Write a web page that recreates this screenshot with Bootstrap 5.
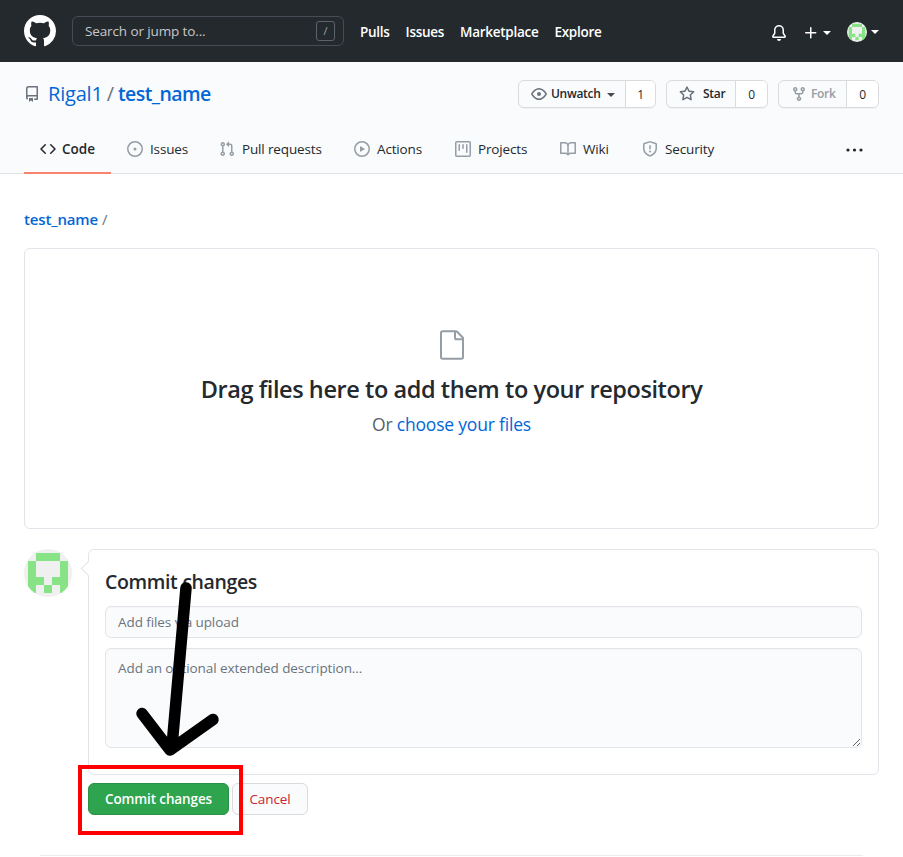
<!DOCTYPE html>
<html lang="en">
<head>
<meta charset="utf-8">
<meta name="viewport" content="width=device-width, initial-scale=1">
<title>Upload files · Rigal1/test_name</title>
<link href="https://cdn.jsdelivr.net/npm/bootstrap@5.3.0/dist/css/bootstrap.min.css" rel="stylesheet">
<style>
body{font-family:"Open Sans","Noto Sans",sans-serif;font-size:14px;line-height:20px;color:#24292e;background:#fff;height:857px;overflow:hidden}
a{text-decoration:none;color:#0366d6}
svg{display:block;flex:none;fill:currentColor}
.w6{font-weight:600}
.topbar{background:#24292e;height:62px;color:#fff}
.logo{margin-top:-1px}
.search{width:272px;height:30px;border:1px solid #444d56;border-radius:6px;color:#c6c8ca;padding:0 8px 0 12px;margin:-1px 16px 0;font-size:13.5px;letter-spacing:-.12px}
.slash{width:19px;height:20px;border:1px solid #5b636c;border-radius:3px;font-size:11px;line-height:18px;color:#9ba1a6;text-align:center}
.topnav a{color:#fff;font-weight:600;font-size:13.5px;letter-spacing:-.28px;white-space:nowrap;padding-top:2px}
.tri{width:0;height:0;border:4px solid transparent;border-top-color:currentColor;border-bottom:0}
.repohead{background:#fafbfc;height:112px;border-bottom:1px solid #e1e4e8}
.titlebar{height:28px;margin-top:18px}
.repotitle{font-size:20px;line-height:28px;white-space:nowrap}
.own{letter-spacing:-.2px}
.rep{font-size:19.5px;letter-spacing:-.6px}
.acts{font-size:12px;line-height:18px;gap:10px}
.act{height:28px;border:1px solid #d9dbdd;border-radius:6px;background:#fafbfc;box-shadow:0 1px 0 rgba(27,31,35,.04);overflow:hidden;letter-spacing:-.3px}
.act svg,.ico{color:#6a737d}
.act .tri{color:#444a50;margin:2px 0 0 6px}
.cnt{background:#fff;border-left:1px solid #d9dbdd;width:32px;text-align:center;line-height:27px;height:26px}
.a1{width:138px}.a2{width:102px}.a3{width:101px}
.a1 .cnt{width:30px}
.off,.act .off svg{color:#959da5}
.tabs{margin-top:17px;height:49px}
.tab{height:49px;padding:0 0 0 16px;white-space:nowrap;color:#24292e;border-bottom:2px solid transparent;font-size:13.5px;letter-spacing:-.15px}
.tab svg{color:#959da5;margin-right:7px}
.tab.on{border-color:#f9826c;font-weight:600;letter-spacing:0}
.tab.on svg{color:#24292e;margin-right:6px}
.t1{width:87px}.t2{width:92px}.t3{width:135px}.t4{width:101px}.t5{width:105px}.t6{width:82px}.t7{width:108px}
.more{padding-bottom:2px}
.crumb{font-size:15px;line-height:24px;margin-top:33px}
.cr{letter-spacing:-.15px}
.drop{height:281px;margin-top:17px;border:1px solid #e1e4e8;border-radius:6px;text-align:center;padding-top:80px}
.drop h3{font-size:23.5px;line-height:32px;font-weight:600;letter-spacing:-.42px;margin:12px 0 5px}
.drop p{font-size:17.5px;line-height:28px;letter-spacing:-.2px;color:#586069;margin:0}
.ava{border-radius:50%}
.peer{margin-top:-2px}
.commitrow{margin-top:20px}
.commit{width:791px;height:226px;border:1px solid #e1e4e8;border-radius:6px;padding:17px 16px 0}
.commit::before{content:"";position:absolute;left:-6px;top:13px;width:11px;height:11px;background:#fff;border:1px solid #e1e4e8;border-width:0 0 1px 1px;transform:rotate(45deg)}
.commit h3{font-size:19.5px;line-height:30px;font-weight:600;letter-spacing:-.36px;margin:0 0 9px}
.form-control.fld{background:#fafbfc;border:1px solid #e1e4e8;border-radius:6px;font-size:13.5px;letter-spacing:-.08px;line-height:20px;padding:5px 12px;height:32px;color:#6a737d;box-shadow:inset 0 1px 0 rgba(225,228,232,.2)}
.form-control.fld::placeholder{color:#6a737d;opacity:1}
.form-control.area{height:100px;padding-top:9px;margin-top:10px;resize:vertical}
.btns{margin:8px 0 0 64px;gap:3px}
.btn.bt{height:32px;padding:0;border-radius:6px;font-size:13.5px;letter-spacing:-.12px;line-height:20px;font-weight:600}
.btn.go,.btn.go:hover{width:141px;background:#2ea44f;border-color:#2a9147;color:#fff}
.btn.no,.btn.no:hover{width:76px;background:#fafbfc;border-color:#d9dbdd;color:#cb2431;font-weight:500}
.foot{margin:40px 16px 0;border-top:1px solid #eaecef}
.redbox{left:78px;top:765px;width:165px;height:70px;border:4px solid #f00}
.arrow{left:0;top:0;pointer-events:none}
</style>
<script src="https://cdn.jsdelivr.net/npm/bootstrap@5.3.0/dist/js/bootstrap.bundle.min.js"></script>
</head>
<body class="position-relative">
<svg width="0" height="0" class="position-absolute">
<symbol id="ident" viewBox="0 0 48 48"><rect width="48" height="48" fill="#f0f0f0"/><path fill="#87e386" d="M12 4h24v8h8v32h-8v-8h-8v-8h8V12H12v16h8v8h-8v8H4V12h8zM20 36h8v8h-8z"/></symbol>
</svg>
<header class="topbar d-flex align-items-center px-4">
  <a href="#" class="text-white logo"><svg width="32" height="32" viewBox="0 0 16 16"><path fill-rule="evenodd" d="M8 0C3.58 0 0 3.58 0 8c0 3.54 2.29 6.53 5.47 7.59.4.07.55-.17.55-.38 0-.19-.01-.82-.01-1.49-2.01.37-2.53-.49-2.69-.94-.09-.23-.48-.94-.82-1.13-.28-.15-.68-.52-.01-.53.63-.01 1.08.58 1.23.82.72 1.21 1.87.87 2.33.66.07-.52.28-.87.51-1.07-1.78-.2-3.64-.89-3.64-3.95 0-.87.31-1.59.82-2.15-.08-.2-.36-1.02.08-2.12 0 0 .67-.21 2.2.82.64-.18 1.32-.27 2-.27.68 0 1.36.09 2 .27 1.53-1.04 2.2-.82 2.2-.82.44 1.1.16 1.92.08 2.12.51.56.82 1.27.82 2.15 0 3.07-1.87 3.75-3.65 3.95.29.25.54.73.54 1.48 0 1.07-.01 1.93-.01 2.2 0 .21.15.46.55.38A8.013 8.013 0 0016 8c0-4.42-3.58-8-8-8z"/></svg></a>
  <div class="search d-flex align-items-center justify-content-between"><span>Search or jump to...</span><span class="slash">/</span></div>
  <nav class="topnav d-flex gap-3"><a href="#">Pulls</a><a href="#">Issues</a><a href="#">Marketplace</a><a href="#">Explore</a></nav>
  <div class="d-flex align-items-center ms-auto pt-1">
    <svg width="16" height="16" viewBox="0 0 16 16"><path d="M8 16a2 2 0 001.985-1.75c.017-.137-.097-.25-.235-.25h-3.5c-.138 0-.252.113-.235.25A2 2 0 008 16z"/><path fill-rule="evenodd" d="M8 1.5A3.5 3.5 0 004.5 5v2.947c0 .346-.102.683-.294.97l-1.703 2.556a.018.018 0 00-.003.01l.001.006c0 .002.002.004.004.006a.017.017 0 00.006.004l.007.001h10.964l.007-.001a.016.016 0 00.006-.004.016.016 0 00.004-.006l.001-.007a.017.017 0 00-.003-.01l-1.703-2.554a1.75 1.75 0 01-.294-.97V5A3.5 3.5 0 008 1.5zM3 5a5 5 0 0110 0v2.947c0 .05.015.098.042.139l1.703 2.555A1.518 1.518 0 0113.482 13H2.518a1.518 1.518 0 01-1.263-2.36l1.703-2.554A.25.25 0 003 7.947V5z"/></svg>
    <svg class="ms-3" width="16" height="16" viewBox="0 0 16 16"><path d="M7.75 2a.75.75 0 01.75.75V7h4.25a.75.75 0 010 1.5H8.5v4.25a.75.75 0 01-1.5 0V8.5H2.75a.75.75 0 010-1.5H7V2.75A.75.75 0 017.75 2z"/></svg>
    <span class="tri ms-1"></span>
    <svg class="ava peer ms-3" width="20" height="20"><use href="#ident"/></svg>
    <span class="tri peer ms-1"></span>
  </div>
</header>
<section class="repohead px-4 d-flex flex-column">
  <div class="titlebar d-flex align-items-center justify-content-between">
    <div class="repotitle d-flex align-items-center"><svg class="ico me-2" width="16" height="16" viewBox="0 0 16 16"><path fill-rule="evenodd" d="M2 2.5A2.5 2.5 0 014.5 0h8.75a.75.75 0 01.75.75v12.5a.75.75 0 01-.75.75h-2.5a.75.75 0 110-1.5h1.75v-2h-8a1 1 0 00-.714 1.7.75.75 0 01-1.072 1.05A2.495 2.495 0 012 11.5v-9zm10.5-1V9h-8c-.356 0-.694.074-1 .208V2.5a1 1 0 011-1h8zM5 12.25v3.25a.25.25 0 00.4.2l1.45-1.087a.25.25 0 01.3 0L8.6 15.7a.25.25 0 00.4-.2v-3.25a.25.25 0 00-.25-.25h-3.5a.25.25 0 00-.25.25z"/></svg><a href="#" class="own">Rigal1</a><span class="mx-1 text-secondary">/</span><a href="#" class="w6 rep">test_name</a></div>
    <div class="acts d-flex">
      <div class="act a1 d-flex"><span class="d-flex align-items-center flex-grow-1 ps-2 w6"><svg class="ms-1 me-1" width="16" height="16" viewBox="0 0 16 16"><path fill-rule="evenodd" d="M1.679 7.932c.412-.621 1.242-1.75 2.366-2.717C5.175 4.242 6.527 3.5 8 3.5c1.473 0 2.824.742 3.955 1.715 1.124.967 1.954 2.096 2.366 2.717a.119.119 0 010 .136c-.412.621-1.242 1.75-2.366 2.717C10.825 11.758 9.473 12.5 8 12.5c-1.473 0-2.824-.742-3.955-1.715C2.92 9.818 2.09 8.69 1.679 8.068a.119.119 0 010-.136zM8 2c-1.981 0-3.67.992-4.933 2.078C1.797 5.169.88 6.423.43 7.1a1.619 1.619 0 000 1.798c.45.678 1.367 1.932 2.637 3.024C4.329 13.008 6.019 14 8 14c1.981 0 3.67-.992 4.933-2.078 1.27-1.091 2.187-2.345 2.637-3.023a1.619 1.619 0 000-1.798c-.45-.678-1.367-1.932-2.637-3.023C11.671 2.992 9.981 2 8 2zm0 8a2 2 0 100-4 2 2 0 000 4z"/></svg>Unwatch<span class="tri"></span></span><span class="cnt">1</span></div>
      <div class="act a2 d-flex"><span class="d-flex align-items-center flex-grow-1 ps-2 w6"><svg class="ms-1 me-2" width="16" height="16" viewBox="0 0 16 16"><path fill-rule="evenodd" d="M8 .25a.75.75 0 01.673.418l1.882 3.815 4.21.612a.75.75 0 01.416 1.279l-3.046 2.97.719 4.192a.75.75 0 01-1.088.791L8 12.347l-3.766 1.98a.75.75 0 01-1.088-.79l.72-4.194L.818 6.374a.75.75 0 01.416-1.28l4.21-.611L7.327.668A.75.75 0 018 .25zm0 2.445L6.615 5.5a.75.75 0 01-.564.41l-3.097.45 2.24 2.184a.75.75 0 01.216.664l-.528 3.084 2.769-1.456a.75.75 0 01.698 0l2.77 1.456-.53-3.084a.75.75 0 01.216-.664l2.24-2.183-3.096-.45a.75.75 0 01-.564-.41L8 2.694v.001z"/></svg>Star</span><span class="cnt">0</span></div>
      <div class="act a3 d-flex"><span class="d-flex align-items-center flex-grow-1 ps-2 off w6"><svg class="ms-1 me-1" width="16" height="16" viewBox="0 0 16 16"><path fill-rule="evenodd" d="M5 3.25a.75.75 0 11-1.5 0 .75.75 0 011.5 0zm0 2.122a2.25 2.25 0 10-1.5 0v.878A2.25 2.25 0 005.75 8.5h1.5v2.128a2.251 2.251 0 101.5 0V8.5h1.5a2.25 2.25 0 002.25-2.25v-.878a2.25 2.25 0 10-1.5 0v.878a.75.75 0 01-.75.75h-4.5A.75.75 0 015 6.25v-.878zm3.75 7.378a.75.75 0 11-1.5 0 .75.75 0 011.5 0zm3-8.75a.75.75 0 100-1.5.75.75 0 000 1.5z"/></svg>Fork</span><span class="cnt">0</span></div>
    </div>
  </div>
  <nav class="tabs d-flex">
    <a href="#" class="tab t1 on d-flex align-items-center"><svg width="16" height="16" viewBox="0 0 16 16"><path fill-rule="evenodd" d="M4.72 3.22a.75.75 0 011.06 1.06L2.06 8l3.72 3.72a.75.75 0 11-1.06 1.06L.47 8.53a.75.75 0 010-1.06l4.25-4.25zm6.56 0a.75.75 0 10-1.06 1.06L13.94 8l-3.72 3.72a.75.75 0 101.06 1.06l4.25-4.25a.75.75 0 000-1.06l-4.25-4.25z"/></svg>Code</a>
    <a href="#" class="tab t2 d-flex align-items-center"><svg width="16" height="16" viewBox="0 0 16 16"><path fill-rule="evenodd" d="M8 1.5a6.5 6.5 0 100 13 6.5 6.5 0 000-13zM0 8a8 8 0 1116 0A8 8 0 010 8z"/><circle cx="8" cy="8" r="1.5"/></svg>Issues</a>
    <a href="#" class="tab t3 d-flex align-items-center"><svg width="16" height="16" viewBox="0 0 16 16"><path fill-rule="evenodd" d="M7.177 3.073L9.573.677A.25.25 0 0110 .854v4.792a.25.25 0 01-.427.177L7.177 3.427a.25.25 0 010-.354zM3.75 2.5a.75.75 0 100 1.5.75.75 0 000-1.5zm-2.25.75a2.25 2.25 0 113 2.122v5.256a2.251 2.251 0 11-1.5 0V5.372A2.25 2.25 0 011.5 3.25zM11 2.5h-1V4h1a1 1 0 011 1v5.628a2.251 2.251 0 101.5 0V5A2.5 2.5 0 0011 2.5zm1 10.25a.75.75 0 111.5 0 .75.75 0 01-1.5 0zM3.75 12a.75.75 0 100 1.5.75.75 0 000-1.5z"/></svg>Pull requests</a>
    <a href="#" class="tab t4 d-flex align-items-center"><svg width="16" height="16" viewBox="0 0 16 16"><path fill-rule="evenodd" d="M1.5 8a6.5 6.5 0 1113 0 6.5 6.5 0 01-13 0zM8 0a8 8 0 100 16A8 8 0 008 0zM6.379 5.227A.25.25 0 006 5.442v5.117a.25.25 0 00.379.214l4.264-2.559a.25.25 0 000-.428L6.379 5.227z"/></svg>Actions</a>
    <a href="#" class="tab t5 d-flex align-items-center"><svg width="16" height="16" viewBox="0 0 16 16"><path fill-rule="evenodd" d="M1.75 0A1.75 1.75 0 000 1.75v12.5C0 15.216.784 16 1.75 16h12.5A1.75 1.75 0 0016 14.25V1.75A1.75 1.75 0 0014.25 0H1.75zM1.5 1.75a.25.25 0 01.25-.25h12.5a.25.25 0 01.25.25v12.5a.25.25 0 01-.25.25H1.75a.25.25 0 01-.25-.25V1.75zM11.75 3a.75.75 0 00-.75.75v7.5a.75.75 0 001.5 0v-7.5a.75.75 0 00-.75-.75zm-8.25.75a.75.75 0 011.5 0v5.5a.75.75 0 01-1.5 0v-5.5zM8 3a.75.75 0 00-.75.75v3.5a.75.75 0 001.5 0v-3.5A.75.75 0 008 3z"/></svg>Projects</a>
    <a href="#" class="tab t6 d-flex align-items-center"><svg width="16" height="16" viewBox="0 0 16 16"><path fill-rule="evenodd" d="M0 1.75A.75.75 0 01.75 1h4.253c1.227 0 2.317.59 3 1.501A3.744 3.744 0 0111.006 1h4.245a.75.75 0 01.75.75v10.5a.75.75 0 01-.75.75h-4.507a2.25 2.25 0 00-1.591.659l-.622.621a.75.75 0 01-1.06 0l-.622-.621A2.25 2.25 0 005.258 13H.75a.75.75 0 01-.75-.75V1.75zm8.755 3a2.25 2.25 0 012.25-2.25H14.5v9h-3.757c-.71 0-1.4.201-1.992.572l.004-7.322zm-1.504 7.324l.004-5.073-.002-2.253A2.25 2.25 0 005.003 2.5H1.5v9h3.757a3.75 3.75 0 011.994.574z"/></svg>Wiki</a>
    <a href="#" class="tab t7 d-flex align-items-center"><svg width="16" height="16" viewBox="0 0 16 16"><path fill-rule="evenodd" d="M7.467.133a1.75 1.75 0 011.066 0l5.25 1.68A1.75 1.75 0 0115 3.48V7c0 1.566-.32 3.182-1.303 4.682-.983 1.498-2.585 2.813-5.032 3.855a1.7 1.7 0 01-1.33 0c-2.447-1.042-4.049-2.357-5.032-3.855C1.32 10.182 1 8.566 1 7V3.48a1.75 1.75 0 011.217-1.667l5.25-1.68zm.61 1.429a.25.25 0 00-.153 0l-5.25 1.68a.25.25 0 00-.174.238V7c0 1.358.275 2.666 1.057 3.86.784 1.194 2.121 2.34 4.366 3.297a.2.2 0 00.154 0c2.245-.956 3.582-2.104 4.366-3.298C13.225 9.666 13.5 8.36 13.5 7V3.48a.25.25 0 00-.174-.237l-5.25-1.68zM9 10.5a1 1 0 11-2 0 1 1 0 012 0zm-.25-5.75a.75.75 0 10-1.5 0v3a.75.75 0 001.5 0v-3z"/></svg>Security</a>
    <a href="#" class="more ms-auto text-dark d-flex align-items-center pe-3"><svg width="17" height="16" viewBox="0 0 17 16"><circle cx="2" cy="9" r="1.6"/><circle cx="8.5" cy="9" r="1.6"/><circle cx="15" cy="9" r="1.6"/></svg></a>
  </nav>
</section>
<main class="px-4">
  <div class="crumb"><a href="#" class="w6 cr">test_name</a><span class="ms-1 text-secondary">/</span></div>
  <div class="drop">
    <svg class="mx-auto" width="32" height="32" viewBox="0 0 24 24" color="#959da5"><path fill-rule="evenodd" d="M5 2.5a.5.5 0 00-.5.5v18a.5.5 0 00.5.5h14a.5.5 0 00.5-.5V8.5h-4a2 2 0 01-2-2v-4H5zm10 0v4a.5.5 0 00.5.5h4a.5.5 0 00-.146-.336l-4.018-4.018A.5.5 0 0015 2.5zM3 3a2 2 0 012-2h9.982a2 2 0 011.414.586l4.018 4.018A2 2 0 0121 7.018V21a2 2 0 01-2 2H5a2 2 0 01-2-2V3z"/></svg>
    <h3>Drag files here to add them to your repository</h3>
    <p>Or <a href="#">choose your files</a></p>
  </div>
  <div class="commitrow d-flex justify-content-between">
    <svg class="ava" width="48" height="48"><use href="#ident"/></svg>
    <div class="commit position-relative">
      <h3>Commit changes</h3>
      <input class="form-control fld" placeholder="Add files via upload" aria-label="Commit summary">
      <textarea class="form-control fld area" placeholder="Add an optional extended description..." aria-label="Description"></textarea>
    </div>
  </div>
  <div class="btns d-flex"><button class="btn bt go">Commit changes</button><button class="btn bt no">Cancel</button></div>
  <div class="foot"></div>
</main>
<div class="redbox position-absolute"></div>
<svg class="arrow position-absolute" width="903" height="857" viewBox="0 0 903 857"><path fill="none" stroke="#000" stroke-width="11.5" stroke-linecap="round" stroke-linejoin="round" d="M186 588L172 746M142 713.5L170 750L213 719.500"/></svg>
</body>
</html>
